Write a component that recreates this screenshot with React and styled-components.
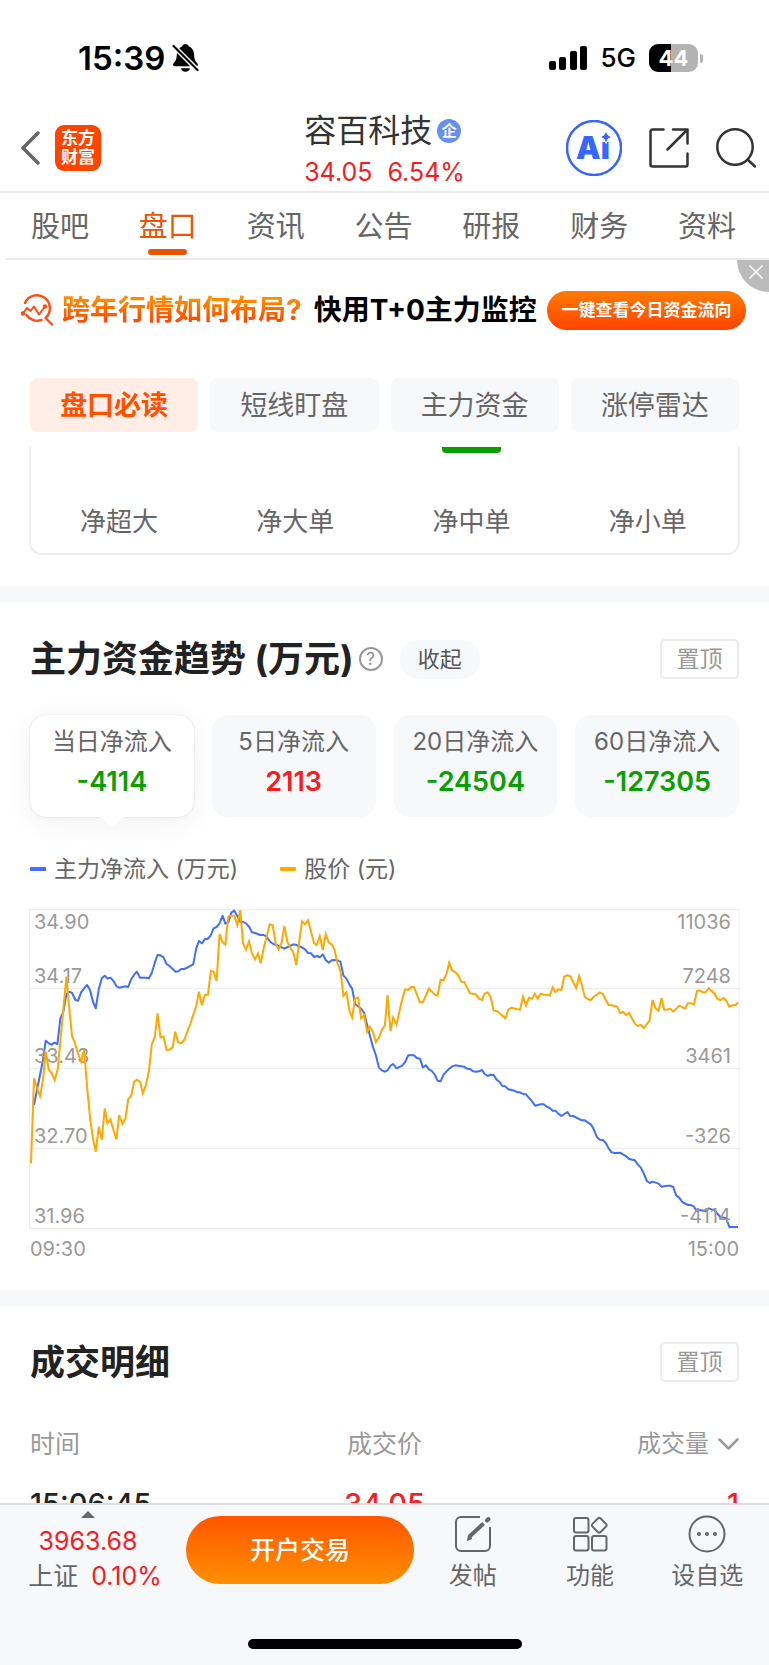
import React from "react";
import styled, { createGlobalStyle } from "styled-components";

const Global = createGlobalStyle`
  *, *::before, *::after { box-sizing: border-box; }
  body {
    margin: 0;
    background: #fff;
    color: #222;
    font-family: Inter, "Noto Sans CJK SC", sans-serif;
  }
  button { font: inherit; color: inherit; background: none; border: 0; padding: 0; cursor: pointer; }
  a { color: inherit; text-decoration: none; }
  h1, h2, p { margin: 0; font-weight: 400; }
  svg { display: block; flex: none; }
`;

const RED = "#f81c22";
const GREEN = "#0a9f00";
const ORANGE = "#ea5504";

const Page = styled.div`
  display: flex;
  flex-direction: column;
  height: 100vh;
  overflow: hidden;
`;

const StatusBar = styled.div`
  flex: none;
  display: flex;
  align-items: center;
  justify-content: space-between;
  height: 104px;
  padding: 12px 66px 0 78px;
  color: #000;
`;

const StatusGroup = styled.div`
  display: flex;
  align-items: center;
  gap: ${(p) => p.$gap}px;
`;

const Clock = styled.span`
  font-size: 33px;
  line-height: 40px;
  font-weight: 600;
`;

const Network = styled.span`
  font-size: 26px;
  line-height: 30px;
  font-weight: 500;
`;

const Battery = styled.div`
  display: flex;
  align-items: center;
  gap: 2px;
  &::after {
    content: "";
    width: 3px;
    height: 9px;
    border-radius: 0 4px 4px 0;
    background: #b3b3b3;
  }
`;

const BatteryBody = styled.span`
  width: 49px;
  height: 28px;
  border-radius: 9px;
  background: linear-gradient(90deg, #000 44%, #b3b3b3 44%);
  color: #fff;
  font-size: 22px;
  line-height: 28px;
  font-weight: 700;
  text-align: center;
`;

const Header = styled.header`
  flex: none;
  display: grid;
  grid-template-columns: 1fr auto 1fr;
  align-items: center;
  height: 89px;
  padding: 0 13px;
  border-bottom: 2px solid #ebebeb;
`;

const HeaderSide = styled.div`
  display: flex;
  align-items: center;
  justify-content: ${(p) => (p.$end ? "flex-end" : "flex-start")};
  gap: ${(p) => p.$gap}px;
  padding-left: ${(p) => (p.$end ? 0 : 7)}px;
`;

const Logo = styled.div`
  width: 46px;
  height: 46px;
  padding: 4px 0;
  border-radius: 9px;
  background: #ff4400;
  color: #fff;
  font-size: 17px;
  line-height: 19px;
  font-weight: 700;
  text-align: center;
`;

const Stock = styled.div`
  padding-top: 4px;
`;

const StockName = styled.h1`
  display: flex;
  align-items: center;
  gap: 5px;
  font-size: 32px;
  line-height: 44px;
  color: #333;
`;

const Badge = styled.span`
  width: 24px;
  height: 24px;
  border-radius: 50%;
  background: #6592ec;
  color: #fff;
  font-size: 15px;
  line-height: 23px;
  font-weight: 700;
  text-align: center;
`;

const Quote = styled.p`
  display: flex;
  gap: 15px;
  font-size: 25px;
  line-height: 38px;
  color: ${RED};
`;

const Tabs = styled.nav`
  flex: none;
  display: grid;
  grid-template-columns: repeat(7, 1fr);
  height: 67px;
  margin-left: 6px;
  padding-right: 8px;
  border-bottom: 2px solid #ebebeb;
`;

const Tab = styled.a`
  display: flex;
  flex-direction: column;
  align-items: center;
  justify-content: space-between;
  padding: 13px 0 3px;
  font-size: 29px;
  line-height: 42px;
  color: ${(p) => (p.$active ? ORANGE : "#666")};
  &::after {
    content: "";
    width: 39px;
    height: 6px;
    border-radius: 3px;
    background: ${(p) => (p.$active ? ORANGE : "transparent")};
  }
`;

const Banner = styled.div`
  flex: none;
  position: relative;
  display: flex;
  align-items: center;
  justify-content: space-between;
  height: 100px;
  padding: 0 23px 0 21px;
`;

const BannerText = styled.p`
  display: flex;
  align-items: center;
  gap: 8px;
  font-size: 28px;
  line-height: 40px;
  font-weight: 700;
  white-space: nowrap;
  color: #000;
`;

const BannerHot = styled.span`
  padding-right: 4px;
  background: linear-gradient(#ff8a00 25%, #ff4a00 75%);
  background-clip: text;
  color: transparent;
`;

const BannerButton = styled.button`
  width: 199px;
  height: 39px;
  border-radius: 20px;
  background: linear-gradient(#ff7b00, #ff4400);
  color: #fff;
  font-size: 17px;
  line-height: 36px;
  font-weight: 700;
`;

const CloseButton = styled.button`
  position: absolute;
  top: 0;
  right: 0;
  width: 32px;
  height: 32px;
  padding: 0 0 8px 12px;
  border-radius: 0 0 0 32px;
  background: #bbb;
`;

const Anchors = styled.div`
  flex: none;
  display: grid;
  grid-template-columns: repeat(4, 1fr);
  gap: 12px;
  padding: 18px 30px 15px;
`;

const Anchor = styled.button`
  height: 54px;
  padding-top: 2px;
  border-radius: 8px;
  background: ${(p) => (p.$active ? "#ffede6" : "#f7f8fa")};
  color: ${(p) => (p.$active ? "#ff5000" : "#666")};
  font-size: 27px;
  line-height: 52px;
  font-weight: ${(p) => (p.$active ? 700 : 400)};
`;

const Content = styled.main`
  flex: 1;
  min-height: 0;
  overflow-y: auto;
  scrollbar-width: none;
`;

const OrderCard = styled.div`
  display: grid;
  grid-template-columns: repeat(4, 1fr);
  height: 108px;
  margin: 0 29px 31px;
  padding-right: 2px;
  border: 2px solid #ededed;
  border-top: 0;
  border-radius: 0 0 13px 13px;
`;

const OrderColumn = styled.div`
  display: flex;
  flex-direction: column;
  align-items: center;
  justify-content: space-between;
  padding-bottom: 13px;
  font-size: 26px;
  line-height: 36px;
  color: #666;
`;

const OrderBar = styled.span`
  width: 59px;
  height: 6px;
  border-radius: 0 0 4px 4px;
  background: ${(p) => (p.$shown ? GREEN : "transparent")};
`;

const Section = styled.section`
  border-top: 16px solid #f7f8fa;
  padding: ${(p) => p.$top}px 30px 0;
`;

const SectionHead = styled.div`
  display: flex;
  align-items: center;
  height: 40px;
`;

const SectionTitle = styled.h2`
  font-size: 35px;
  line-height: 40px;
  font-weight: 700;
  color: #222;
  white-space: nowrap;
`;

const TrendTitle = styled(SectionTitle)`
  font-size: 36px;
`;

const HelpButton = styled.button`
  width: 24px;
  height: 24px;
  margin: 0 17px 0 5px;
  border: 2px solid #999;
  border-radius: 50%;
  color: #888;
  font-size: 17px;
  line-height: 20px;
`;

const FoldButton = styled.button`
  width: 80px;
  height: 39px;
  border-radius: 20px;
  background: #f7f8fa;
  color: #555;
  font-size: 22px;
  line-height: 39px;
`;

const PinButton = styled.button`
  width: 79px;
  height: 40px;
  margin-left: auto;
  border: 2px solid #ebebeb;
  border-radius: 5px;
  color: #999;
  font-size: 23px;
  line-height: 36px;
`;

const Periods = styled.div`
  display: grid;
  grid-template-columns: repeat(4, 1fr);
  gap: 18px;
  padding-top: 36px;
`;

const Period = styled.button`
  position: relative;
  height: 102px;
  padding-bottom: 8px;
  border-radius: 16px;
  background: ${(p) => (p.$active ? "#fff" : "#f7f8fa")};
  box-shadow: ${(p) => (p.$active ? "0 0 2px rgba(0,0,0,.16), 0 6px 28px rgba(0,0,0,.06)" : "none")};
  &::after {
    content: "";
    display: ${(p) => (p.$active ? "block" : "none")};
    position: absolute;
    left: calc(50% - 12px);
    top: 100%;
    width: 24px;
    height: 11px;
    background: #fff;
    clip-path: polygon(0 0, 100% 0, 50% 100%);
  }
`;

const PeriodLabel = styled.span`
  display: block;
  font-size: 24px;
  line-height: 40px;
  color: #666;
  white-space: nowrap;
`;

const PeriodValue = styled.span`
  display: block;
  font-size: 27px;
  line-height: 40px;
  font-weight: 600;
  color: ${(p) => (p.$up ? RED : GREEN)};
`;

const Legend = styled.div`
  display: flex;
  gap: 42px;
  padding: 34px 0 22px;
`;

const LegendItem = styled.span`
  display: flex;
  align-items: center;
  gap: 8px;
  font-size: 23px;
  line-height: 36px;
  color: #666;
  &::before {
    content: "";
    width: 16px;
    height: 4px;
    border-radius: 1px;
    background: ${(p) => p.$color};
  }
`;

const Plot = styled.div`
  display: grid;
  height: 320px;
  margin: 0 -1px;
  & > * { grid-area: 1 / 1; }
`;

const PlotLayer = styled.svg`
  width: 100%;
  height: 320px;
`;

const Scale = styled.div`
  display: grid;
  grid-template-rows: repeat(4, 1fr);
  padding: 0 9px 0 5px;
  font-size: 20px;
  line-height: 26px;
  color: #999;
`;

const ScaleLabel = styled.span`
  grid-column: 1;
  grid-row: ${(p) => p.$row};
  align-self: ${(p) => (p.$start ? "start" : "end")};
  justify-self: ${(p) => (p.$right ? "end" : "start")};
`;

const TimeAxis = styled.div`
  display: flex;
  justify-content: space-between;
  height: 61px;
  padding-top: 7px;
  font-size: 20px;
  line-height: 26px;
  color: #999;
`;

const Trades = styled.table`
  width: 100%;
  margin-top: 41px;
  border-collapse: collapse;
  table-layout: fixed;
  th, td { padding: 0; text-align: center; }
  th:first-child, td:first-child { text-align: left; }
  th:last-child, td:last-child { text-align: right; }
  th { height: 40px; font-size: 25px; line-height: 40px; font-weight: 400; color: #999; }
  td { height: 80px; font-size: 29px; line-height: 80px; font-weight: 500; color: ${RED}; }
  td:first-child { color: #222; }
`;

const SortButton = styled.button`
  display: inline-flex;
  align-items: center;
  gap: 9px;
  font-size: 24px;
  line-height: 40px;
`;

const BottomBar = styled.footer`
  flex: none;
  display: flex;
  flex-direction: column;
  justify-content: space-between;
  height: 162px;
  padding-bottom: 16px;
  border-top: 2px solid #dcdddf;
  background: #f7f8fa;
`;

const Actions = styled.div`
  display: grid;
  grid-template-columns: 186fr 228fr 355fr;
  align-items: start;
`;

const IndexBox = styled.a`
  display: flex;
  flex-direction: column;
  align-items: center;
  padding: 6px 10px 0 0;
  font-size: 25px;
  line-height: 35px;
  color: ${RED};
  white-space: nowrap;
`;

const IndexLine = styled.span`
  display: flex;
  gap: 13px;
  padding-left: 14px;
`;

const IndexValue = styled.span`
  padding-top: 6px;
`;

const IndexName = styled.span`
  color: #666;
`;

const TradeButton = styled.button`
  height: 68px;
  margin-top: 11px;
  border-radius: 34px;
  background: linear-gradient(#ff5500, #ff9000);
  color: #fff;
  font-size: 25px;
  line-height: 66px;
  font-weight: 500;
`;

const Tools = styled.div`
  display: grid;
  grid-template-columns: repeat(3, 1fr);
  padding-right: 3px;
`;

const Tool = styled.button`
  display: flex;
  flex-direction: column;
  align-items: center;
  gap: 5px;
  padding-top: 10px;
  font-size: 24px;
  line-height: 36px;
  color: #666;
`;

const HomeIndicator = styled.div`
  align-self: center;
  width: 274px;
  height: 10px;
  border-radius: 5px;
  background: #000;
`;

const FLOW =
  "15,588 24,543 33,498 42,453 50,395 59,403 68,407 77,401 85,405 94,328 103,308 112,255 121,248 129,252 139,273 147,275 156,250 165,238 174,228 183,244 191,276 200,298 209,241 218,208 227,200 235,209 244,206 253,216 262,232 271,236 289,232 297,234 306,211 315,197 323,188 333,206 350,206 359,208 368,191 377,161 385,138 394,139 403,145 412,165 421,171 439,188 447,187 456,180 465,180 474,176 492,166 501,118 509,96 518,103 527,90 535,90 544,80 553,58 562,54 571,43 580,20 588,44 597,40 606,11 615,5 624,21 633,38 642,39 651,44 660,54 668,70 677,72 693,78 703,78 712,83 721,97 730,104 748,111 765,119 775,114 792,106 801,108 819,116 827,121 836,132 845,133 854,144 863,141 871,145 880,136 889,153 898,161 907,154 915,153 924,154 933,158 942,200 951,209 960,227 968,239 977,285 995,299 1004,312 1013,348 1030,413 1039,438 1048,475 1057,484 1066,488 1074,484 1083,470 1091,465 1101,478 1118,470 1127,459 1136,439 1153,439 1162,447 1171,449 1180,475 1189,469 1198,481 1207,486 1216,498 1224,515 1233,517 1242,497 1259,479 1268,472 1277,469 1303,473 1312,479 1321,480 1330,487 1339,488 1348,487 1357,483 1365,495 1374,501 1383,497 1392,498 1401,512 1410,519 1418,531 1427,532 1436,541 1454,545 1463,550 1471,550 1480,555 1489,556 1507,577 1516,590 1533,586 1542,586 1551,593 1560,597 1569,605 1577,605 1586,614 1595,621 1613,609 1621,621 1630,621 1656,634 1665,634 1683,646 1692,661 1701,684 1710,692 1719,693 1728,702 1736,717 1745,730 1754,732 1771,731 1789,742 1798,750 1815,754 1824,767 1833,776 1842,794 1851,816 1860,822 1868,818 1886,824 1895,833 1912,830 1921,830 1930,834 1939,860 1948,866 1957,879 1974,888 1983,888 1992,893 2001,907 2010,903 2027,907 2036,898 2054,904 2071,924 2089,928 2098,954 2124,954";

const PRICE =
  "6,763 15,508 24,536 33,561 42,513 50,428 59,481 68,493 77,513 86,481 112,203 121,303 129,381 138,403 147,435 156,458 165,423 174,533 183,628 192,691 200,728 209,653 218,693 227,598 235,643 244,631 253,663 262,691 270,618 280,645 289,628 297,571 306,561 315,518 323,512 333,519 341,553 350,528 359,488 368,405 377,383 385,313 394,385 403,383 412,422 421,422 430,415 438,368 447,400 456,403 465,393 474,369 483,345 492,318 501,291 509,248 518,289 527,257 536,257 545,185 553,188 562,215 571,75 580,101 588,107 597,23 606,20 615,20 624,48 633,3 641,103 650,122 659,97 668,133 677,151 686,133 694,163 703,118 712,83 721,46 730,49 739,103 748,122 757,101 765,51 774,98 783,118 792,130 801,168 810,93 818,37 827,46 836,34 845,68 854,103 862,108 871,81 880,123 889,76 898,101 907,106 915,121 924,163 933,185 942,261 951,250 960,306 968,325 977,269 986,266 995,328 1004,319 1013,368 1021,353 1030,368 1039,399 1048,386 1057,363 1066,350 1074,258 1083,366 1091,326 1101,346 1118,271 1127,241 1136,243 1145,234 1153,234 1163,259 1171,280 1180,280 1189,260 1198,238 1207,248 1215,257 1224,260 1233,212 1242,214 1251,193 1259,161 1268,185 1277,189 1286,199 1295,218 1304,219 1321,253 1330,254 1339,256 1348,269 1357,273 1365,254 1374,250 1383,264 1392,305 1401,306 1410,313 1427,328 1436,302 1445,296 1463,301 1471,302 1480,263 1489,289 1498,266 1507,269 1515,254 1524,269 1533,254 1542,257 1551,257 1560,260 1569,235 1577,249 1586,241 1595,243 1603,203 1613,199 1622,202 1631,221 1639,237 1648,201 1657,231 1665,264 1674,270 1683,273 1692,263 1710,250 1719,255 1736,288 1745,289 1762,293 1771,312 1780,309 1789,318 1798,312 1815,344 1824,351 1833,348 1842,357 1859,335 1868,273 1877,298 1886,305 1895,268 1903,302 1912,302 1921,299 1930,308 1948,290 1965,299 1974,283 1983,283 1992,286 2001,247 2009,244 2018,250 2027,250 2036,238 2054,254 2062,269 2071,273 2080,267 2089,275 2098,293 2107,289 2116,289 2124,280";

const TABS = ["股吧", "盘口", "资讯", "公告", "研报", "财务", "资料"];
const ANCHORS = ["盘口必读", "短线盯盘", "主力资金", "涨停雷达"];
const ORDERS = ["净超大", "净大单", "净中单", "净小单"];
const PERIODS = [
  ["当日净流入", "-4114"],
  ["5日净流入", "2113"],
  ["20日净流入", "-24504"],
  ["60日净流入", "-127305"],
];
const SCALES = [
  ["34.90", "11036"],
  ["34.17", "7248"],
  ["33.43", "3461"],
  ["32.70", "-326"],
  ["31.96", "-4114"],
];

const MutedBell = () => (
  <svg width="27" height="28" viewBox="0 0 27 28">
    <path d="M13.500 0c1.800 0 3 1.200 3.400 2.600 3.600 1.400 5 4.400 5.200 8 .2 5 1 6.200 3.200 8.600 1.200 1.400.6 3-1.200 3H3c-2 0-2.600-1.600-1.400-3 2.200-2.400 3-3.600 3.200-8.600.2-3.600 1.700-6.600 5.300-8C10.500 1.200 11.700 0 13.500 0zM9 24.200h9c-.4 2.200-2.200 3.600-4.500 3.600S9.400 26.400 9 24.200z" fill="#000" />
    <path d="M1 1.500l25 25" stroke="#fff" strokeWidth="5" />
    <path d="M1.500 2l24 24" stroke="#000" strokeWidth="2.200" strokeLinecap="round" />
  </svg>
);

const Signal = () => (
  <svg width="38" height="24" viewBox="0 0 38 24">
    <rect x="0" y="15" width="7" height="9" rx="2" />
    <rect x="10" y="11" width="7" height="13" rx="2" />
    <rect x="21" y="5" width="7" height="19" rx="2" />
    <rect x="31" y="0" width="7" height="24" rx="2" />
  </svg>
);

const BackIcon = () => (
  <svg width="20" height="34" viewBox="0 0 20 34" fill="none" stroke="#666" strokeWidth="3.500" strokeLinecap="round" strokeLinejoin="round">
    <path d="M18 2L3 17l15 15" />
  </svg>
);

const AiIcon = () => (
  <svg width="56" height="56" viewBox="0 0 56 56">
    <circle cx="28" cy="28" r="27" fill="#fff" stroke="#3566ff" strokeWidth="2.500" />
    <text x="10" y="39" fontFamily="Inter, sans-serif" fontSize="31" fontWeight="900" fill="#3566ff">Ai</text>
    <path d="M40 11l2 4 4 2-4 2-2 4.500-2-4.500-4-2 4-2z" fill="#3566ff" stroke="#fff" strokeWidth="1" />
  </svg>
);

const ShareIcon = () => (
  <svg width="40" height="40" viewBox="0 0 40 40" fill="none" stroke="#333" strokeWidth="2.500" strokeLinecap="round" strokeLinejoin="round">
    <path d="M14.500 1.500H3.500a2 2 0 0 0-2 2v33a2 2 0 0 0 2 2h33a2 2 0 0 0 2-2V25.500" />
    <path d="M24 1.500h14.500V15.500M38.500 1.500L18.500 21.500" />
  </svg>
);

const SearchIcon = () => (
  <svg width="40" height="40" viewBox="0 0 40 40" fill="none" stroke="#333" strokeWidth="2.500" strokeLinecap="round">
    <circle cx="19" cy="19" r="17.700" />
    <path d="M31.500 31.500l7.500 7" />
  </svg>
);

const TrendIcon = () => (
  <svg width="33" height="32" viewBox="0 0 33 32" fill="none" stroke="#ff4d10" strokeWidth="2.400" strokeLinecap="round" strokeLinejoin="round">
    <path d="M4 9a13 13 0 1 1 20.500 15L31 30.500" />
    <path d="M20.500 26A13 13 0 0 1 5.500 21" />
    <path d="M1.500 20l4.500-6 3.500 3 3.500-4.500 5 8 6-8" strokeWidth="2" />
    <circle cx="2" cy="19.500" r="1" />
    <circle cx="24" cy="12.500" r="1" />
  </svg>
);

const CloseIcon = () => (
  <svg width="14" height="14" viewBox="0 0 14 14" stroke="#fff" strokeWidth="1.600" strokeLinecap="round">
    <path d="M1 1l12 12M13 1L1 13" />
  </svg>
);

const ChevronDown = () => (
  <svg width="21" height="12" viewBox="0 0 21 12" fill="none" stroke="#999" strokeWidth="2.500" strokeLinecap="round" strokeLinejoin="round">
    <path d="M1.500 1.500l9 9 9-9" />
  </svg>
);

const UpMark = () => (
  <svg width="14" height="7" viewBox="0 0 14 7">
    <path d="M7 0l7 7H0z" fill="#666" />
  </svg>
);

const PostIcon = () => (
  <svg width="38" height="38" viewBox="0 0 38 38" fill="none" stroke="#666" strokeWidth="2">
    <path d="M26 2H7a5 5 0 0 0-5 5v24a5 5 0 0 0 5 5h24a5 5 0 0 0 5-5V12" />
    <path d="M15.500 21.500L29.500 8.500" strokeWidth="4" />
    <path d="M13.500 25.500l1-5 3.500 3z" fill="#666" strokeWidth="1" />
    <path d="M33 5.500l1.500-1.500" strokeWidth="4" strokeLinecap="round" />
  </svg>
);

const GridIcon = () => (
  <svg width="38" height="38" viewBox="0 0 38 38" fill="none" stroke="#666" strokeWidth="2" strokeLinejoin="round">
    <rect x="3" y="3" width="14.500" height="14.500" rx="2" />
    <rect x="3" y="21" width="14.500" height="14.500" rx="2" />
    <rect x="21" y="21" width="14.500" height="14.500" rx="2" />
    <rect x="22.500" y="4.500" width="11.500" height="11.500" rx="2" transform="rotate(45 28.250 10.250)" />
  </svg>
);

const MoreIcon = () => (
  <svg width="38" height="38" viewBox="0 0 38 38">
    <circle cx="19" cy="19" r="17.500" fill="none" stroke="#666" strokeWidth="2" />
    <circle cx="11" cy="19" r="2" fill="#666" />
    <circle cx="19" cy="19" r="2" fill="#666" />
    <circle cx="27" cy="19" r="2" fill="#666" />
  </svg>
);

const TOOLS = [
  ["发帖", PostIcon],
  ["功能", GridIcon],
  ["设自选", MoreIcon],
];

function TrendChart() {
  return (
    <>
      <Plot>
        <PlotLayer viewBox="0 0 2130 960" preserveAspectRatio="none" fill="none">
          <path d="M0 2H2130M0 239H2130M0 479H2130M0 719H2130M0 958H2130M2 0V960M2127 0V960" stroke="#e9e9e9" strokeWidth="3" />
          <polyline points={FLOW} stroke="#3f6ffb" strokeWidth="6" strokeLinejoin="round" />
        </PlotLayer>
        <Scale>
          {SCALES.map(([price, flow], i) => (
            <React.Fragment key={price}>
              <ScaleLabel $row={Math.max(i, 1)} $start={i === 0}>{price}</ScaleLabel>
              <ScaleLabel $row={Math.max(i, 1)} $start={i === 0} $right>{flow}</ScaleLabel>
            </React.Fragment>
          ))}
        </Scale>
        <PlotLayer viewBox="0 0 2130 960" preserveAspectRatio="none" fill="none">
          <polyline points={PRICE} stroke="#ffa800" strokeWidth="6" strokeLinejoin="miter" />
        </PlotLayer>
      </Plot>
      <TimeAxis>
        <span>09:30</span>
        <span>15:00</span>
      </TimeAxis>
    </>
  );
}

export default function App() {
  return (
    <Page>
      <Global />
      <StatusBar>
        <StatusGroup $gap={7}>
          <Clock>15:39</Clock>
          <MutedBell />
        </StatusGroup>
        <StatusGroup $gap={13}>
          <Signal />
          <Network>5G</Network>
          <Battery>
            <BatteryBody>44</BatteryBody>
          </Battery>
        </StatusGroup>
      </StatusBar>

      <Header>
        <HeaderSide $gap={15}>
          <button type="button" aria-label="返回"><BackIcon /></button>
          <Logo>东方<br />财富</Logo>
        </HeaderSide>
        <Stock>
          <StockName>容百科技<Badge>企</Badge></StockName>
          <Quote><span>34.05</span><span>6.54%</span></Quote>
        </Stock>
        <HeaderSide $end $gap={27}>
          <button type="button" aria-label="智能助手"><AiIcon /></button>
          <button type="button" aria-label="分享"><ShareIcon /></button>
          <button type="button" aria-label="搜索"><SearchIcon /></button>
        </HeaderSide>
      </Header>

      <Tabs>
        {TABS.map((name, i) => (
          <Tab key={name} href="#" $active={i === 1}>{name}</Tab>
        ))}
      </Tabs>

      <Banner>
        <BannerText>
          <TrendIcon />
          <BannerHot>跨年行情如何布局?</BannerHot>
          <span>快用T+0主力监控</span>
        </BannerText>
        <BannerButton type="button">一键查看今日资金流向</BannerButton>
        <CloseButton type="button" aria-label="关闭"><CloseIcon /></CloseButton>
      </Banner>

      <Anchors>
        {ANCHORS.map((name, i) => (
          <Anchor key={name} type="button" $active={i === 0}>{name}</Anchor>
        ))}
      </Anchors>

      <Content>
        <OrderCard>
          {ORDERS.map((name, i) => (
            <OrderColumn key={name}>
              <OrderBar $shown={i === 2} />
              <span>{name}</span>
            </OrderColumn>
          ))}
        </OrderCard>

        <Section $top={37}>
          <SectionHead>
            <TrendTitle>主力资金趋势 (万元)</TrendTitle>
            <HelpButton type="button">?</HelpButton>
            <FoldButton type="button">收起</FoldButton>
            <PinButton type="button">置顶</PinButton>
          </SectionHead>
          <Periods>
            {PERIODS.map(([label, value], i) => (
              <Period key={label} type="button" $active={i === 0}>
                <PeriodLabel>{label}</PeriodLabel>
                <PeriodValue $up={!value.startsWith("-")}>{value}</PeriodValue>
              </Period>
            ))}
          </Periods>
          <Legend>
            <LegendItem $color="#3f6ffb">主力净流入 (万元)</LegendItem>
            <LegendItem $color="#ffa800">股价 (元)</LegendItem>
          </Legend>
          <TrendChart />
        </Section>

        <Section $top={36}>
          <SectionHead>
            <SectionTitle>成交明细</SectionTitle>
            <PinButton type="button">置顶</PinButton>
          </SectionHead>
          <Trades>
            <thead>
              <tr>
                <th scope="col">时间</th>
                <th scope="col">成交价</th>
                <th scope="col"><SortButton type="button">成交量<ChevronDown /></SortButton></th>
              </tr>
            </thead>
            <tbody>
              <tr>
                <td>15:06:45</td>
                <td>34.05</td>
                <td>1</td>
              </tr>
            </tbody>
          </Trades>
        </Section>
      </Content>

      <BottomBar>
        <Actions>
          <IndexBox href="#">
            <UpMark />
            <IndexValue>3963.68</IndexValue>
            <IndexLine><IndexName>上证</IndexName><span>0.10%</span></IndexLine>
          </IndexBox>
          <TradeButton type="button">开户交易</TradeButton>
          <Tools>
            {TOOLS.map(([name, Icon]) => (
              <Tool key={name} type="button"><Icon />{name}</Tool>
            ))}
          </Tools>
        </Actions>
        <HomeIndicator />
      </BottomBar>
    </Page>
  );
}
